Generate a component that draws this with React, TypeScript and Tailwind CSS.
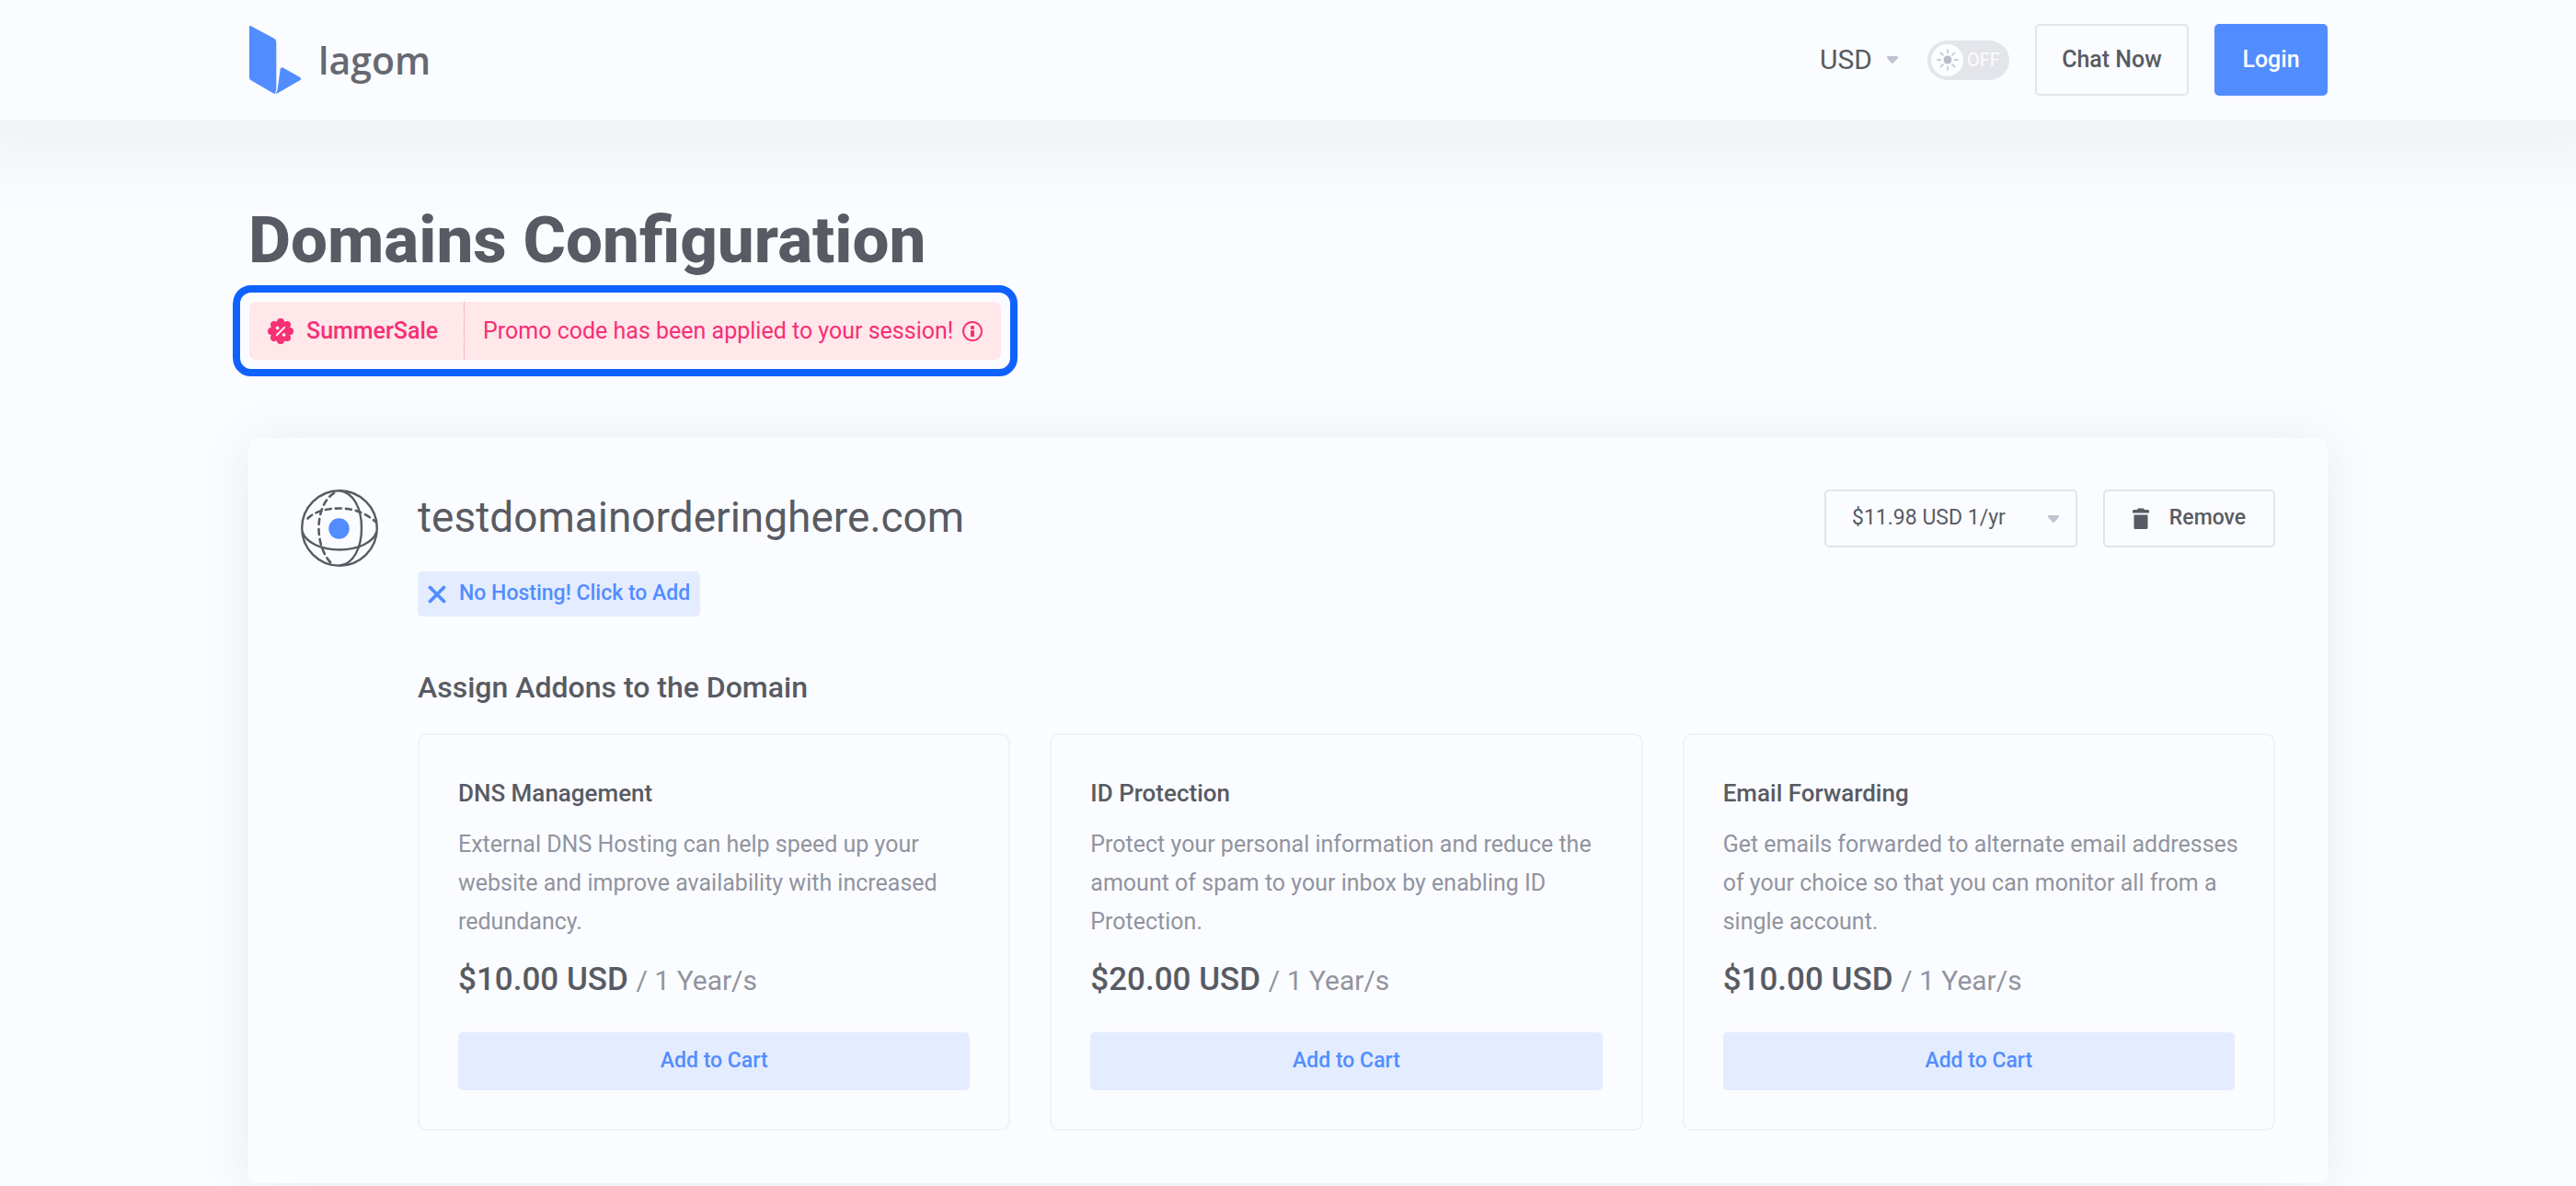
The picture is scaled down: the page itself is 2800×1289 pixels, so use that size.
import { useState } from 'react';

type Addon = { name: string; description: string; price: string; term: string };

const ADDONS: Addon[] = [
  {
    name: 'DNS Management',
    description:
      'External DNS Hosting can help speed up your website and improve availability with increased redundancy.',
    price: '$10.00 USD',
    term: '1 Year/s',
  },
  {
    name: 'ID Protection',
    description:
      'Protect your personal information and reduce the amount of spam to your inbox by enabling ID Protection.',
    price: '$20.00 USD',
    term: '1 Year/s',
  },
  {
    name: 'Email Forwarding',
    description:
      'Get emails forwarded to alternate email addresses of your choice so that you can monitor all from a single account.',
    price: '$10.00 USD',
    term: '1 Year/s',
  },
];

function LogoMark() {
  return (
    <svg viewBox="90 81 174 228" className="h-[76px] w-[58px]" fill="#528dff" aria-hidden="true">
      <path d="M93 87Q93 82 98 84.500L174 125.500Q181 129.500 181 137.500V289Q181 296 176 305Q172 305 168 302L97 261Q93 258 93 252Z" />
      <path d="M194 225Q196 217 204 221L258 252Q265 257 258 262L188 302Q183 305 177 305.500Q184 300 185 290Z" />
    </svg>
  );
}

function Caret() {
  return (
    <svg viewBox="0 0 12 8" className="h-2 w-3" fill="#bfc4d1" aria-hidden="true">
      <path d="M1.500 0H10.500Q12 0 12 1.400Q12 2.200 11.200 3L7.200 7.300Q6 8.500 4.800 7.300L.8 3Q0 2.200 0 1.400Q0 0 1.500 0Z" />
    </svg>
  );
}

function SunIcon() {
  return (
    <svg viewBox="0 0 24 24" className="size-6" aria-hidden="true">
      <circle cx="12" cy="12" r="4.500" fill="#b9bdca" />
      <g stroke="#c3c8d6" strokeWidth="1.800" strokeLinecap="round">
        <path d="M12 1.200V4.200M12 19.800V22.800M1.200 12H4.200M19.800 12H22.800M4.400 4.400L6.900 6.900M17.100 17.100L19.600 19.600M4.400 19.600L6.900 17.100M17.100 6.900L19.600 4.400" />
      </g>
    </svg>
  );
}

function DiscountIcon() {
  const petals = [
    [14, 4], [21, 7], [24, 14], [21, 21],
    [14, 24], [7, 21], [4, 14], [7, 7],
  ];
  return (
    <svg viewBox="0 0 28 28" className="size-7 shrink-0" aria-hidden="true">
      <g fill="#f72f75">
        <circle cx="14" cy="14" r="11" />
        {petals.map(([x, y]) => (
          <circle key={`${x}-${y}`} cx={x} cy={y} r="4" />
        ))}
      </g>
      <path d="M9.800 18.200L18.200 9.800" stroke="#ffe7ea" strokeWidth="2" strokeLinecap="round" />
      <circle cx="10.600" cy="10.400" r="1.900" fill="#ffe7ea" />
      <circle cx="17.600" cy="17.800" r="1.900" fill="#ffe7ea" />
    </svg>
  );
}

function InfoIcon() {
  return (
    <svg viewBox="0 0 22 22" className="size-[22px] shrink-0" aria-hidden="true">
      <circle cx="11" cy="11" r="10" fill="none" stroke="#f72f75" strokeWidth="1.900" />
      <rect x="9" y="5" width="4" height="4" rx="1.200" fill="#f72f75" />
      <rect x="9" y="10" width="4" height="7" rx="1" fill="#f72f75" />
    </svg>
  );
}

function GlobeIcon() {
  return (
    <svg viewBox="0 0 84 84" className="size-[84px] shrink-0" fill="none" stroke="#585b63" strokeWidth="2.400" aria-hidden="true">
      <circle cx="42" cy="42" r="40.800" />
      <path d="M42 1.200C57 3 66 20 66 42S57 81 42 82.800" />
      <path d="M1.500 46C6 58 22 65.500 42 65.500S78 58 82.500 46" />
      <g strokeWidth="2.600" strokeLinecap="round" strokeDasharray="6 5">
        <path d="M36 4C25 11 19.500 26 19.500 42S25 72 33 80" />
        <path d="M7.500 31.500C15 24 27 20.500 42 20.500S70 25 81 35" />
      </g>
      <circle cx="41.500" cy="42.500" r="11.200" fill="#528dff" stroke="none" />
    </svg>
  );
}

function CrossIcon() {
  return (
    <svg viewBox="0 0 20 20" className="size-5 shrink-0" aria-hidden="true">
      <path d="M2.500 2.500L17.500 17.500M17.500 2.500L2.500 17.500" stroke="#528dff" strokeWidth="3.800" strokeLinecap="round" />
    </svg>
  );
}

function TrashIcon() {
  return (
    <svg viewBox="0 0 18 23" className="h-[23px] w-[18px] shrink-0" fill="#585b63" aria-hidden="true">
      <path d="M6 .5H12L13 2H16.500Q18 2 18 3.500V5.600H0V3.500Q0 2 1.500 2H5Z" />
      <path d="M1.500 7.500H16.500V21.500Q16.500 23 15 23H3Q1.500 23 1.500 21.500Z" />
    </svg>
  );
}

function ThemeSwitch() {
  const [dark, setDark] = useState(false);
  return (
    <label className="relative flex h-[43px] w-[89px] cursor-pointer items-center gap-1 rounded-full bg-[#e4e5ea] p-1">
      <input
        type="checkbox"
        role="switch"
        aria-label="Dark mode"
        checked={dark}
        onChange={(e) => setDark(e.target.checked)}
        className="absolute inset-0 cursor-pointer appearance-none rounded-full"
      />
      <span className="flex size-[35px] items-center justify-center rounded-full bg-[#fcfdff]">
        <SunIcon />
      </span>
      <span className="text-[20px] leading-none text-[#fcfdff]">{dark ? 'ON' : 'OFF'}</span>
    </label>
  );
}

function Header() {
  return (
    <header className="relative bg-[#fbfcff] shadow-[0_8px_70px_40px_rgba(88,91,99,0.06)]">
      <div className="mx-auto flex h-[130px] max-w-[2260px] items-center justify-between">
        <a href="#" className="flex items-center gap-[18px]">
          <LogoMark />
          <span className="font-['Open_Sans',sans-serif] text-[41px] leading-none font-semibold text-[#666972]">lagom</span>
        </a>
        <nav className="flex items-center gap-7">
          <div className="relative mr-1 flex items-center">
            <select aria-label="Currency" className="w-[85px] appearance-none bg-transparent text-[30px] leading-[40px]">
              <option>USD</option>
            </select>
            <span className="pointer-events-none absolute right-0">
              <Caret />
            </span>
          </div>
          <ThemeSwitch />
          <button type="button" className="h-[78px] w-[167px] rounded-[5px] border-2 border-[#e3e4e9] text-[25px] font-medium">
            Chat Now
          </button>
          <button type="button" className="h-[78px] w-[123px] rounded-[5px] bg-[#528dff] text-[25px] font-medium text-white">
            Login
          </button>
        </nav>
      </div>
    </header>
  );
}

function PromoBanner() {
  return (
    <div className="-ml-[17px] mt-[9px] w-fit rounded-[20px] border-8 border-[#1062fe] bg-[#fbfcff] p-[10px]">
      <div className="flex h-[63px] items-stretch rounded-[7px] bg-[#ffe7ea] text-[25px] text-[#f72f75]">
        <div className="flex w-[234px] items-center gap-[14px] border-r border-dotted border-[#f98bb0] pl-5 font-medium">
          <DiscountIcon />
          SummerSale
        </div>
        <div className="flex items-center gap-[10px] px-5">
          Promo code has been applied to your session!
          <InfoIcon />
        </div>
      </div>
    </div>
  );
}

function AddonCard({ addon }: { addon: Addon }) {
  return (
    <article className="flex flex-col rounded-[10px] border-2 border-[#f1f2f6] px-[42px] pt-[43px] pb-[42px]">
      <h3 className="text-[26px] leading-[40px] font-medium">{addon.name}</h3>
      <p className="-mr-2 mt-[15px] text-[25px] leading-[42px] text-[#9194a0]">{addon.description}</p>
      <p className="mt-[18px] text-[35px] leading-[48px] font-medium">
        {addon.price} <span className="text-[30px] font-normal text-[#9194a0]">/ {addon.term}</span>
      </p>
      <button type="button" className="mt-8 h-[63px] rounded-[5px] bg-[#e4ecff] text-[23px] font-medium text-[#528dff]">
        Add to Cart
      </button>
    </article>
  );
}

function DomainCard() {
  return (
    <section className="mt-[67px] flex gap-[43px] rounded-[10px] bg-[#fbfcff] p-[57px] pt-14 shadow-[0_4px_56px_rgba(88,91,99,0.11)]">
      <GlobeIcon />
      <div className="min-w-0 flex-1">
        <div className="flex items-start justify-between">
          <div>
            <h2 className="text-[46px] leading-[60px]">testdomainorderinghere.com</h2>
            <button type="button" className="mt-[29px] flex h-[49px] items-center gap-[14px] rounded-[5px] bg-[#e4ecff] px-[11px] text-[23px] font-medium text-[#528dff]">
              <CrossIcon />
              No Hosting! Click to Add
            </button>
          </div>
          <div className="flex gap-7">
            <div className="relative flex items-center">
              <select aria-label="Registration period" className="h-[63px] w-[275px] appearance-none rounded-[5px] border-2 border-[#e3e4e9] bg-transparent px-7 text-[23px]">
                <option>$11.98 USD 1/yr</option>
              </select>
              <span className="pointer-events-none absolute right-5">
                <Caret />
              </span>
            </div>
            <button type="button" className="flex h-[63px] w-[187px] items-center justify-center gap-[22px] rounded-[5px] border-2 border-[#e3e4e9] text-[23px] font-medium">
              <TrashIcon />
              Remove
            </button>
          </div>
        </div>
        <h2 className="mt-[57px] text-[32px] leading-[40px] font-medium">Assign Addons to the Domain</h2>
        <div className="mt-[30px] grid grid-cols-3 gap-[43px]">
          {ADDONS.map((addon) => (
            <AddonCard key={addon.name} addon={addon} />
          ))}
        </div>
      </div>
    </section>
  );
}

export default function App() {
  return (
    <div className="min-h-screen overflow-hidden bg-[#fbfcff] font-['Roboto',sans-serif] text-[#585b63]">
      <Header />
      <main className="mx-auto max-w-[2260px] pt-[91px]">
        <h1 className="text-[71px] leading-[80px] font-extrabold">Domains Configuration</h1>
        <PromoBanner />
        <DomainCard />
      </main>
    </div>
  );
}
